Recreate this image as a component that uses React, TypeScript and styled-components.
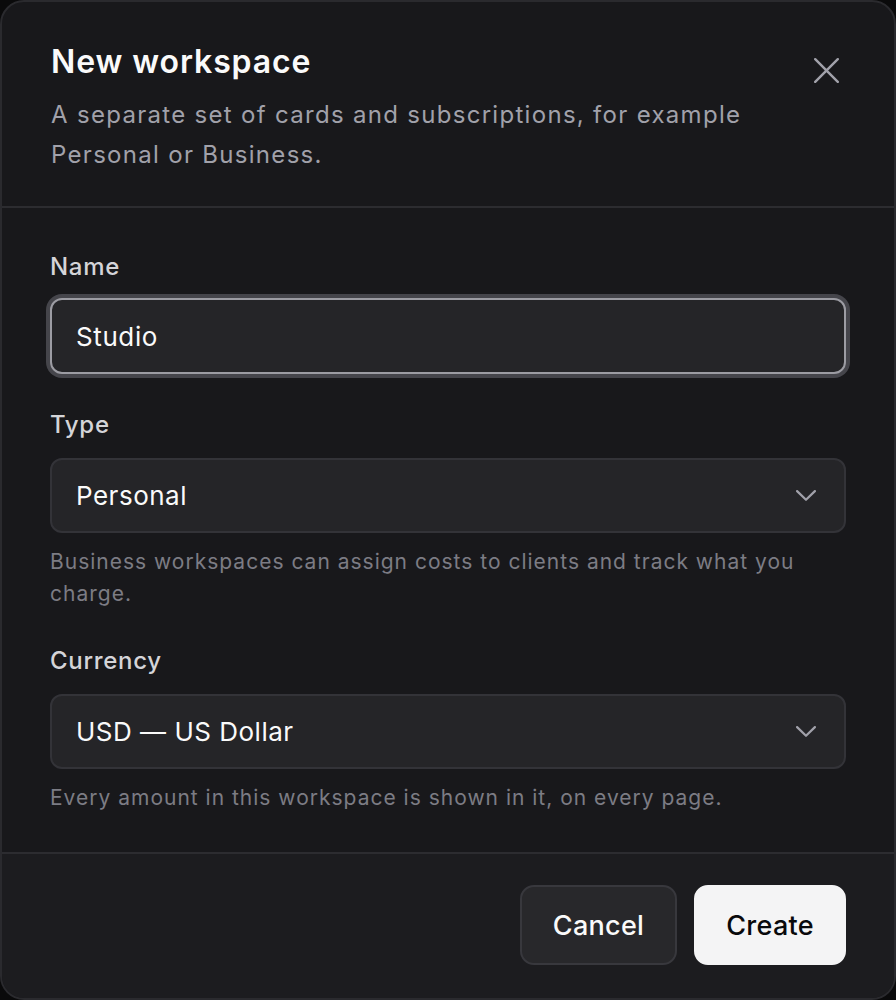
import React from 'react';
import styled, { createGlobalStyle } from 'styled-components';

const GlobalStyle = createGlobalStyle`
  html, body {
    margin: 0;
    padding: 0;
    background: #0a0a0b;
  }
  * {
    box-sizing: border-box;
  }
  body {
    font-family: Inter, "Noto Sans", "Liberation Sans", sans-serif;
    -webkit-font-smoothing: antialiased;
  }
`;

const Dialog = styled.div`
  display: flex;
  flex-direction: column;
  width: 896px;
  height: 1000px;
  background: #18181b;
  border: 2px solid #2a2a2e;
  border-radius: 24px;
  overflow: hidden;
`;

const Header = styled.div`
  display: flex;
  align-items: flex-start;
  gap: 24px;
  padding: 40px 48px 31px 49px;
  border-bottom: 2px solid #2c2c30;
`;

const HeaderText = styled.div`
  display: flex;
  flex: 1;
  flex-direction: column;
  gap: 13px;
`;

const Title = styled.h2`
  margin: 0;
  font-size: 32px;
  line-height: 40px;
  font-weight: 600;
  letter-spacing: 0.9px;
  color: #fafafa;
`;

const Subtitle = styled.p`
  margin: 0;
  font-size: 24px;
  line-height: 40px;
  letter-spacing: 1.3px;
  color: #a1a1aa;
`;

const CloseButton = styled.button`
  display: flex;
  align-items: center;
  justify-content: center;
  width: 40px;
  height: 40px;
  margin-top: 8px;
  padding: 0;
  background: none;
  border: none;
  color: #a1a1aa;
  cursor: pointer;
`;

const Body = styled.div`
  display: flex;
  flex: 1;
  min-height: 0;
  flex-direction: column;
  gap: 35px;
  padding: 43px 48px 0 48px;
`;

const Field = styled.div`
  display: flex;
  flex-direction: column;
`;

const Label = styled.label`
  margin-bottom: 17px;
  font-size: 24px;
  line-height: 32px;
  font-weight: 500;
  letter-spacing: 0.7px;
  color: #d4d4d8;
`;

const Input = styled.input`
  height: 76px;
  margin-top: -2px;
  padding: 0 24px;
  background: #252528;
  border: 2px solid #9c9ca3;
  border-radius: 12px;
  box-shadow: 0 0 0 4px #45454b;
  font-family: inherit;
  font-size: 26px;
  letter-spacing: 0.6px;
  color: #fafafa;
  outline: none;
`;

const Select = styled.button`
  display: flex;
  align-items: center;
  justify-content: space-between;
  height: 75px;
  padding: 0 28px 0 24px;
  background: #252528;
  border: 2px solid #333338;
  border-radius: 12px;
  font-family: inherit;
  font-size: 26px;
  letter-spacing: 0.5px;
  color: #fafafa;
  text-align: left;
  cursor: pointer;
`;

const Hint = styled.p`
  margin: 13px 0 0;
  font-size: 21px;
  line-height: 32px;
  letter-spacing: 1px;
  color: #7c7c84;
`;

const Footer = styled.div`
  display: flex;
  flex-shrink: 0;
  justify-content: flex-end;
  gap: 17px;
  padding: 31px 48px 33px;
  background: #1c1c1f;
  border-top: 2px solid #2c2c30;
`;

const Button = styled.button<{ $primary?: boolean }>`
  height: 80px;
  padding: 0 ${(p) => (p.$primary ? '30px' : '31px')};
  border-radius: 14px;
  border: 2px solid ${(p) => (p.$primary ? '#f4f4f5' : '#38383d')};
  background: ${(p) => (p.$primary ? '#f4f4f5' : '#28282b')};
  color: ${(p) => (p.$primary ? '#09090b' : '#fafafa')};
  font-family: inherit;
  font-size: 27px;
  font-weight: 500;
  letter-spacing: 0.3px;
  cursor: pointer;
`;

function CloseIcon() {
  return (
    <svg width="25" height="25" viewBox="0 0 25 25" fill="none">
      <path d="M1.2 1.2L23.8 23.8M23.8 1.2L1.2 23.8" stroke="currentColor" strokeWidth="2.4" strokeLinecap="round" />
    </svg>
  );
}

function Chevron() {
  return (
    <svg width="20" height="11" viewBox="0 0 20 11" fill="none">
      <path d="M1.1 1.1L10 9.8L18.9 1.1" stroke="#a1a1aa" strokeWidth="2.2" strokeLinecap="round" strokeLinejoin="round" />
    </svg>
  );
}

export default function App() {
  return (
    <>
      <GlobalStyle />
      <Dialog>
        <Header>
          <HeaderText>
            <Title>New workspace</Title>
            <Subtitle>A separate set of cards and subscriptions, for example Personal or Business.</Subtitle>
          </HeaderText>
          <CloseButton aria-label="Close">
            <CloseIcon />
          </CloseButton>
        </Header>
        <Body>
          <Field>
            <Label>Name</Label>
            <Input defaultValue="Studio" />
          </Field>
          <Field>
            <Label>Type</Label>
            <Select>
              <span>Personal</span>
              <Chevron />
            </Select>
            <Hint>Business workspaces can assign costs to clients and track what you charge.</Hint>
          </Field>
          <Field>
            <Label>Currency</Label>
            <Select>
              <span>USD — US Dollar</span>
              <Chevron />
            </Select>
            <Hint>Every amount in this workspace is shown in it, on every page.</Hint>
          </Field>
        </Body>
        <Footer>
          <Button>Cancel</Button>
          <Button $primary>Create</Button>
        </Footer>
      </Dialog>
    </>
  );
}
